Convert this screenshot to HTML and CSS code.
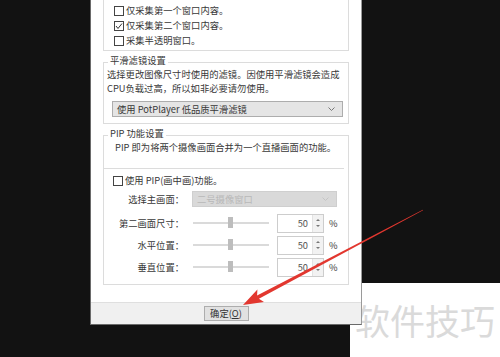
FILE: index.html
```html
<!DOCTYPE html>
<html lang="zh-CN">
<head>
    <meta charset="UTF-8">
    <meta name="viewport" content="width=device-width, initial-scale=1.0">
    <title>PIP 设置</title>
    <link rel="stylesheet" href="styles.css">
</head>
<body>
    <!-- watermark sits behind the dialog -->
    <div class="mark">软件技巧</div>

    <div class="dlg">
        <div class="dlg-body">
            <div class="group group-top">
                <label class="check"><span class="box"></span>仅采集第一个窗口内容。</label>
                <label class="check"><span class="box"><svg width="8" height="8" viewBox="0 0 8 8"><polyline points="1,4 3,6.5 7,1.5" fill="none" stroke="#333" stroke-width="1"/></svg></span>仅采集第二个窗口内容。</label>
                <label class="check"><span class="box"></span>采集半透明窗口。</label>
            </div>

            <fieldset class="group">
                <legend>平滑滤镜设置</legend>
                <p class="desc">选择更改图像尺寸时使用的滤镜。因使用平滑滤镜会造成<br>CPU负载过高，所以如非必要请勿使用。</p>
                <div class="select">
                    <span>使用 PotPlayer 低品质平滑滤镜</span>
                    <svg width="7" height="4" viewBox="0 0 7 4"><polyline points="0.5,0.5 3.5,3.5 6.5,0.5" fill="none" stroke="#777" stroke-width="1"/></svg>
                </div>
            </fieldset>

            <fieldset class="group pip">
                <legend>PIP 功能设置</legend>
                <p class="desc pip-desc">PIP 即为将两个摄像画面合并为一个直播画面的功能。</p>
                <div class="sep"></div>
                <label class="check pip-check"><span class="box"></span>使用 PIP(画中画)功能。</label>

                <div class="row row-select">
                    <span class="lbl">选择主画面：</span>
                    <div class="select off">
                        <span>二号摄像窗口</span>
                        <svg width="7" height="4" viewBox="0 0 7 4"><polyline points="0.5,0.5 3.5,3.5 6.5,0.5" fill="none" stroke="#c4c4c4" stroke-width="1"/></svg>
                    </div>
                </div>
                <div class="row">
                    <span class="lbl">第二画面尺寸：</span>
                    <div class="slider"><span class="thumb"></span></div>
                    <div class="spin"><span class="val">50</span><span class="arrows"><i class="up"></i><i class="down"></i></span></div>
                    <span class="pct">%</span>
                </div>
                <div class="row">
                    <span class="lbl">水平位置：</span>
                    <div class="slider"><span class="thumb"></span></div>
                    <div class="spin"><span class="val">50</span><span class="arrows"><i class="up"></i><i class="down"></i></span></div>
                    <span class="pct">%</span>
                </div>
                <div class="row">
                    <span class="lbl">垂直位置：</span>
                    <div class="slider"><span class="thumb"></span></div>
                    <div class="spin"><span class="val">50</span><span class="arrows"><i class="up"></i><i class="down"></i></span></div>
                    <span class="pct">%</span>
                </div>
            </fieldset>
        </div>
        <div class="dlg-foot">
            <button class="btn" type="button">确定(<u>O</u>)</button>
        </div>
    </div>

    <!-- red pointer drawn over the screenshot -->
    <svg class="arrow" width="500" height="357" viewBox="0 0 500 357">
        <polygon points="243,305 264,301.9 258.9,298.8 423.1,210.3 422.9,209.7 257.1,295.4 257.4,289.5" fill="#e2372f"/>
    </svg>
</body>
</html>
```

FILE: styles.css
```css
body {
    margin: 0;
    width: 500px;
    height: 357px;
    position: relative;
    overflow: hidden;
    background-color: #121212;
    font-family: "Noto Sans CJK SC", "Noto Sans", sans-serif;
    font-size: 9.3px;
    color: #383838;
}
.mark {
    position: absolute;
    left: 350px;
    top: 283px;
    width: 150px;
    height: 74px;
    box-sizing: border-box;
    padding-left: 5px;
    background-color: #fff;
    color: #dadada;
    font-size: 35px;
    line-height: 74px;
    white-space: nowrap;
}
.dlg {
    position: absolute;
    left: 90px;
    top: 0;
    width: 272px;
    height: 325px;
    box-sizing: border-box;
    background-color: #fff;
    border: 1px solid #6a6a6a;
    border-top: none;
    border-right-color: #9a9a9a;
    display: flex;
    flex-direction: column;
}
.dlg-body {
    flex: 1;
    padding: 0 12px;
}
.group {
    border: 1px solid #dcdcdc;
    margin: 0;
    min-width: 0;
}
.group-top {
    margin-top: -10px;
    padding: 12px 0 2px 10px;
}
fieldset.group {
    margin-top: 4.5px;
    padding: 0 3px 6px 3px;
}
/* title sits a little above the frame line, as in the Win32 group box */
legend {
    margin-left: 1px;
    padding: 0 2px 4px 2px;
    line-height: 9px;
}
.check {
    display: flex;
    align-items: center;
    gap: 2px;
    height: 15px;
    line-height: 15px;
}
.box {
    width: 10px;
    height: 10px;
    box-sizing: border-box;
    border: 1px solid #444;
    background-color: #fff;
    display: flex;
    align-items: center;
    justify-content: center;
}
.desc {
    margin: -2px 0 0 0;
    line-height: 14px;
    white-space: nowrap;
}
.select {
    height: 16px;
    box-sizing: border-box;
    border: 1px solid #adadad;
    background-color: #e5e5e5;
    display: flex;
    align-items: center;
    justify-content: space-between;
    padding: 0 7px 0 4px;
    line-height: 14px;
}
fieldset.group > .select {
    margin: 6.5px 2px 0 5px;
}
.select.off {
    width: 145px;
    border-color: #cfcfcf;
    background-color: #d9d9d9;
    color: #b8b8b8;
}
.pip {
    padding-bottom: 5px;
}
.pip-desc {
    margin: -1.5px 0 0 8px;
}
.sep {
    margin: 14px 0 0 -4px;
    width: 241px;
    border-top: 1px solid #dcdcdc;
}
.pip-check {
    margin: 4px 0 0 6px;
}
.row {
    display: flex;
    align-items: center;
    height: 22px;
}
.row-select {
    height: 16px;
    margin: 3px 0 5px 0;
}
.lbl {
    width: 77px;
    margin-right: 8px;
    text-align: right;
    white-space: nowrap;
}
.slider {
    position: relative;
    width: 76px;
    height: 2px;
    margin-left: 1px;
    background-color: #dadada;
}
.thumb {
    position: absolute;
    left: 35px;
    top: -5px;
    width: 5px;
    height: 11px;
    background-color: #bdbdbd;
}
.spin {
    width: 47px;
    height: 19px;
    margin-left: 8px;
    box-sizing: border-box;
    border: 1px solid #cdcdcd;
    background-color: #fff;
    display: flex;
}
.val {
    flex: 1;
    text-align: right;
    padding-right: 4px;
    line-height: 17px;
    color: #555;
}
.arrows {
    width: 10px;
    border-left: 1px solid #e3e3e3;
    background-color: #f2f2f2;
    display: flex;
    flex-direction: column;
    align-items: center;
    justify-content: center;
    gap: 4px;
}
.arrows i {
    width: 0;
    height: 0;
    border-left: 2px solid transparent;
    border-right: 2px solid transparent;
}
.arrows .up {
    border-bottom: 2px solid #777;
}
.arrows .down {
    border-top: 2px solid #777;
}
.pct {
    margin-left: 5px;
}
.dlg-foot {
    height: 22px;
    box-sizing: border-box;
    border-top: 1px solid #dfdfdf;
    background-color: #f0f0f0;
    display: flex;
    justify-content: center;
    align-items: center;
}
.btn {
    width: 45px;
    height: 15px;
    padding: 0;
    border: 1px solid #adadad;
    background-color: #e1e1e1;
    font-family: inherit;
    font-size: 9.3px;
    line-height: 13px;
    color: #333;
}
.arrow {
    position: absolute;
    left: 0;
    top: 0;
    pointer-events: none;
}
```
